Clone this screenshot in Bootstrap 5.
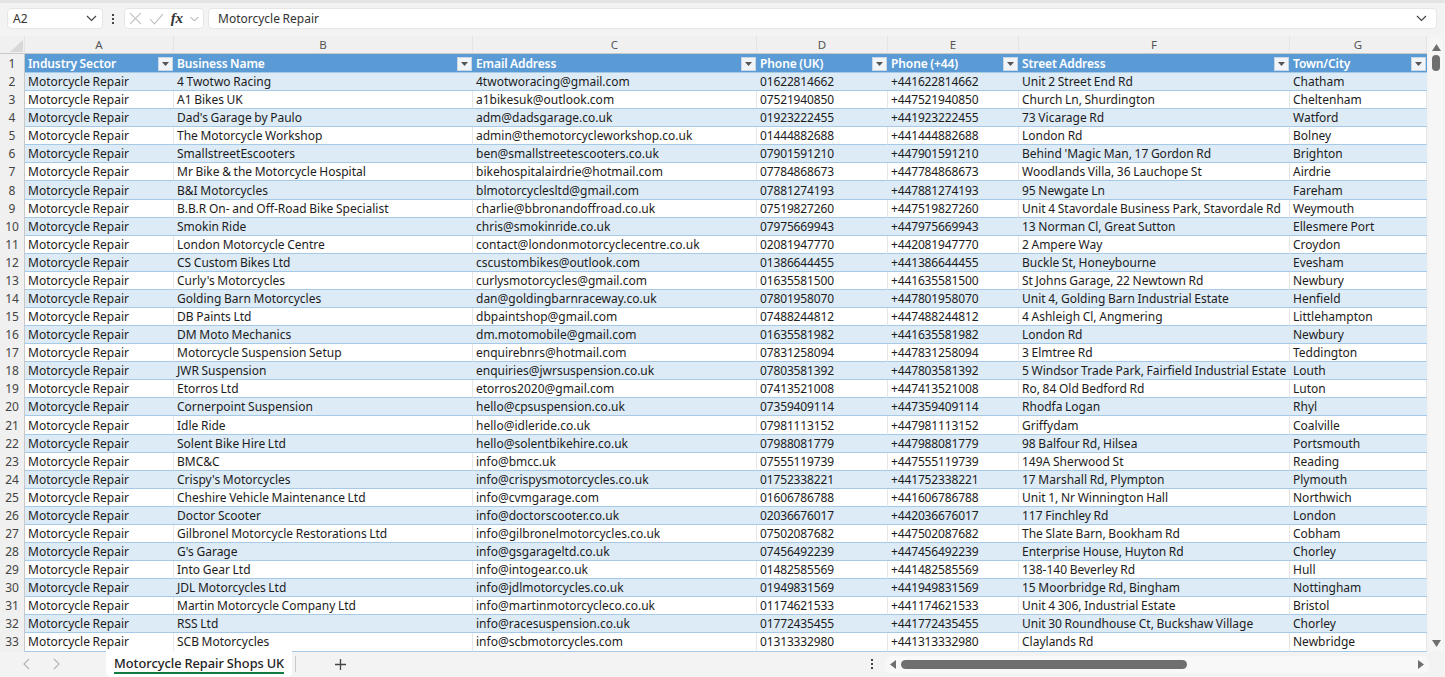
<!DOCTYPE html>
<html lang="en">
<head>
<meta charset="utf-8">
<title>Motorcycle Repair Shops UK</title>
<link href="https://cdn.jsdelivr.net/npm/bootstrap@5.3.0/dist/css/bootstrap.min.css" rel="stylesheet">
<style>
html,body{height:100%;overflow:hidden}
body{background:#f3f3f3;font-family:"Noto Sans","Open Sans",sans-serif;font-size:12px;word-spacing:-.5px;color:#1f1f1f}
.shell{height:677px}
.fbar{height:36px;padding:5px 8px 7px 7px;border-top:3px solid #e4e4e4;gap:4px}
.fbox{background:#fff;border:1px solid #e6e6e6;border-radius:4px;height:21px;color:#333}
.namebox{width:96px;padding:0 5px}
.fxbox{width:80px;padding:0 4px;gap:7px}
.formula{padding:0 9px}
.gridarea{height:615px}
.sheetwrap{width:1427px}
table.sheet{table-layout:fixed;width:1427px;border-collapse:separate;border-spacing:0;margin:0}
table.sheet td,table.sheet th{padding:1px 0 0 3px;height:18.08px;line-height:16px;white-space:nowrap;overflow:hidden;font-weight:400;border-bottom:1px solid #a6c9e8;color:#1c1c1c}
table.sheet thead .letters th{height:18px;background:#f0f0f0;border-bottom:1px solid #c8c8c8;border-right:1px solid #e4e4e4;text-align:center;padding:0;color:#555;font-size:11.5px}
table.sheet thead .letters th.corner{padding:2px 2px 0 10px}
table.sheet tbody th{background:#f0f0f0;color:#444;text-align:center;padding:0;border-bottom:0;border-right:1px solid #c8c8c8;font-size:12px}
table.sheet tr.heads td{background:#5b9bd5;color:#fff;font-weight:600;height:19px;letter-spacing:-.1px;border-bottom:1px solid #a6c9e8}
.headin{display:flex;justify-content:space-between;align-items:center;padding-right:1px}
.filt{width:15px;height:14px;background:#f1f4f8;border:1px solid #c9d6e4;display:flex;align-items:center;justify-content:center;flex:none}
table.sheet tbody tr.band td{background:#ddebf7}
table.sheet tbody tr.plain td{background:#fff;border-right:1px solid #e6e6e6}
table.sheet td.digits{letter-spacing:-.14px}
.vscroll{flex:1;position:relative;background:#f6f6f6;border-radius:6px 6px 0 0;margin:0 2px}
.vthumb{width:8px;height:16px;background:#6f6f6f;border-radius:4px;margin:0 auto}
.tabsbar{height:26px;position:relative}
.navarrows{width:106px;padding-left:23px;gap:23px}
.sheet-tab{width:186px;background:#fff;border-radius:0 0 5px 5px;padding:0 8px;height:26px;font-size:12.8px;line-height:24px;color:#222;font-weight:500;white-space:nowrap}
.sheet-tab span{display:block;border-bottom:2px solid #107c41;height:23px;text-align:center}
.tabsep{width:1px;height:16px;background:#c9c9c9;margin:0 38px 0 3px}
.hscroll{width:544px;height:17px;background:#f8f8f8;border-radius:6px;padding:0 5px;margin-right:16px}
.hthumb{width:286px;height:9px;background:#6f6f6f;border-radius:5px;margin-left:5px}
.dots{margin-right:11px}
</style>
</head>
<body>
<div class="shell d-flex flex-column">
  <div class="fbar d-flex align-items-center">
    <div class="fbox namebox d-flex align-items-center justify-content-between"><span>A2</span>
      <svg width="11" height="7" viewBox="0 0 11 7"><path d="M1 1l4.500 4.500L10 1" fill="none" stroke="#444" stroke-width="1.200"/></svg></div>
    <svg width="5" height="12" viewBox="0 0 5 12" class="mx-1"><g fill="#444"><rect x="1" y="1" width="2" height="2"/><rect x="1" y="5" width="2" height="2"/><rect x="1" y="9" width="2" height="2"/></g></svg>
    <div class="fbox fxbox d-flex align-items-center">
      <svg width="13" height="13" viewBox="0 0 13 13"><path d="M1 1l11 11M12 1L1 12" stroke="#bdbdbd" stroke-width="1.100" fill="none"/></svg>
      <svg width="15" height="12" viewBox="0 0 15 12"><path d="M1 6l4.500 5L14 1" stroke="#bdbdbd" stroke-width="1.100" fill="none"/></svg>
      <span style="font-family:'Liberation Serif',serif;font-style:italic;font-weight:700;font-size:15px;color:#333">fx</span>
      <svg width="9" height="6" viewBox="0 0 9 6"><path d="M.5 1l4 4 4-4" stroke="#999" fill="none"/></svg>
    </div>
    <div class="fbox formula flex-grow-1 d-flex align-items-center justify-content-between"><span>Motorcycle Repair</span>
      <svg width="11" height="7" viewBox="0 0 11 7" class="me-0"><path d="M1 1l4.500 4.500L10 1" fill="none" stroke="#444" stroke-width="1.200"/></svg></div>
  </div>
  <div class="gridarea d-flex">
    <div class="sheetwrap">
    <table class="sheet">
      <colgroup><col style="width:25px"><col style="width:149px"><col style="width:299px"><col style="width:284px"><col style="width:131px"><col style="width:131px"><col style="width:271px"><col style="width:137px"></colgroup>
      <thead><tr class="letters"><th class="corner"><svg width="13" height="12" viewBox="0 0 13 12" class="d-block"><path d="M13 0v12H0z" fill="#d8d8d8"/></svg></th><th>A</th><th>B</th><th>C</th><th>D</th><th>E</th><th>F</th><th>G</th></tr></thead>
      <tbody id="rows"></tbody>
    </table>
    </div>
    <div class="vscroll d-flex flex-column">
      <svg width="9" height="7" viewBox="0 0 9 7" class="mx-auto mt-2 mb-1 d-block"><path d="M4.500 0L9 7H0z" fill="#6f6f6f"/></svg>
      <div class="vthumb"></div>
      <svg width="9" height="7" viewBox="0 0 9 7" class="mx-auto mt-auto mb-1 d-block"><path d="M0 0h9L4.500 7z" fill="#6f6f6f"/></svg>
    </div>
  </div>
  <div class="tabsbar d-flex align-items-center">
    <div class="navarrows d-flex align-items-center">
      <svg width="7" height="12" viewBox="0 0 7 12"><path d="M6 1L1 6l5 5" stroke="#b5b5b5" stroke-width="1.200" fill="none"/></svg>
      <svg width="7" height="12" viewBox="0 0 7 12"><path d="M1 1l5 5-5 5" stroke="#b5b5b5" stroke-width="1.200" fill="none"/></svg>
    </div>
    <div class="sheet-tab"><span>Motorcycle Repair Shops UK</span></div>
    <div class="tabsep"></div>
    <svg width="13" height="13" viewBox="0 0 13 13"><path d="M6.500 1v11M1 6.500h11" stroke="#444" stroke-width="1.300"/></svg>
    <div class="ms-auto d-flex align-items-center">
      <svg width="4" height="12" viewBox="0 0 4 12" class="dots"><g fill="#444"><rect x="1" y="1" width="2" height="2"/><rect x="1" y="5" width="2" height="2"/><rect x="1" y="9" width="2" height="2"/></g></svg>
      <div class="hscroll d-flex align-items-center">
        <svg width="6" height="9" viewBox="0 0 6 9"><path d="M6 0v9L0 4.500z" fill="#6f6f6f"/></svg>
        <div class="hthumb"></div>
        <svg width="6" height="9" viewBox="0 0 6 9" class="ms-auto"><path d="M0 0v9l6-4.500z" fill="#6f6f6f"/></svg>
      </div>
    </div>
  </div>
</div>
<script>
const data=`4 Twotwo Racing|4twotworacing@gmail.com|01622814662|+441622814662|Unit 2 Street End Rd|Chatham
A1 Bikes UK|a1bikesuk@outlook.com|07521940850|+447521940850|Church Ln, Shurdington|Cheltenham
Dad's Garage by Paulo|adm@dadsgarage.co.uk|01923222455|+441923222455|73 Vicarage Rd|Watford
The Motorcycle Workshop|admin@themotorcycleworkshop.co.uk|01444882688|+441444882688|London Rd|Bolney
SmallstreetEscooters|ben@smallstreetescooters.co.uk|07901591210|+447901591210|Behind 'Magic Man, 17 Gordon Rd|Brighton
Mr Bike &amp; the Motorcycle Hospital|bikehospitalairdrie@hotmail.com|07784868673|+447784868673|Woodlands Villa, 36 Lauchope St|Airdrie
B&amp;I Motorcycles|blmotorcyclesltd@gmail.com|07881274193|+447881274193|95 Newgate Ln|Fareham
B.B.R On- and Off-Road Bike Specialist|charlie@bbronandoffroad.co.uk|07519827260|+447519827260|Unit 4 Stavordale Business Park, Stavordale Rd|Weymouth
Smokin Ride|chris@smokinride.co.uk|07975669943|+447975669943|13 Norman Cl, Great Sutton|Ellesmere Port
London Motorcycle Centre|contact@londonmotorcyclecentre.co.uk|02081947770|+442081947770|2 Ampere Way|Croydon
CS Custom Bikes Ltd|cscustombikes@outlook.com|01386644455|+441386644455|Buckle St, Honeybourne|Evesham
Curly's Motorcycles|curlysmotorcycles@gmail.com|01635581500|+441635581500|St Johns Garage, 22 Newtown Rd|Newbury
Golding Barn Motorcycles|dan@goldingbarnraceway.co.uk|07801958070|+447801958070|Unit 4, Golding Barn Industrial Estate|Henfield
DB Paints Ltd|dbpaintshop@gmail.com|07488244812|+447488244812|4 Ashleigh Cl, Angmering|Littlehampton
DM Moto Mechanics|dm.motomobile@gmail.com|01635581982|+441635581982|London Rd|Newbury
Motorcycle Suspension Setup|enquirebnrs@hotmail.com|07831258094|+447831258094|3 Elmtree Rd|Teddington
JWR Suspension|enquiries@jwrsuspension.co.uk|07803581392|+447803581392|5 Windsor Trade Park, Fairfield Industrial Estate|Louth
Etorros Ltd|etorros2020@gmail.com|07413521008|+447413521008|Ro, 84 Old Bedford Rd|Luton
Cornerpoint Suspension|hello@cpsuspension.co.uk|07359409114|+447359409114|Rhodfa Logan|Rhyl
Idle Ride|hello@idleride.co.uk|07981113152|+447981113152|Griffydam|Coalville
Solent Bike Hire Ltd|hello@solentbikehire.co.uk|07988081779|+447988081779|98 Balfour Rd, Hilsea|Portsmouth
BMC&amp;C|info@bmcc.uk|07555119739|+447555119739|149A Sherwood St|Reading
Crispy's Motorcycles|info@crispysmotorcycles.co.uk|01752338221|+441752338221|17 Marshall Rd, Plympton|Plymouth
Cheshire Vehicle Maintenance Ltd|info@cvmgarage.com|01606786788|+441606786788|Unit 1, Nr Winnington Hall|Northwich
Doctor Scooter|info@doctorscooter.co.uk|02036676017|+442036676017|117 Finchley Rd|London
Gilbronel Motorcycle Restorations Ltd|info@gilbronelmotorcycles.co.uk|07502087682|+447502087682|The Slate Barn, Bookham Rd|Cobham
G's Garage|info@gsgarageltd.co.uk|07456492239|+447456492239|Enterprise House, Huyton Rd|Chorley
Into Gear Ltd|info@intogear.co.uk|01482585569|+441482585569|138-140 Beverley Rd|Hull
JDL Motorcycles Ltd|info@jdlmotorcycles.co.uk|01949831569|+441949831569|15 Moorbridge Rd, Bingham|Nottingham
Martin Motorcycle Company Ltd|info@martinmotorcycleco.co.uk|01174621533|+441174621533|Unit 4 306, Industrial Estate|Bristol
RSS Ltd|info@racesuspension.co.uk|01772435455|+441772435455|Unit 30 Roundhouse Ct, Buckshaw Village|Chorley
SCB Motorcycles|info@scbmotorcycles.com|01313332980|+441313332980|Claylands Rd|Newbridge`.split("\n");
const arrow='<span class="filt"><svg width="7" height="4" viewBox="0 0 7 4"><path d="M0 0h7L3.500 4z" fill="#555"/></svg></span>';
const heads=["Industry Sector","Business Name","Email Address","Phone (UK)","Phone (+44)","Street Address","Town/City"];
let h='<tr class="heads"><th>1</th>'+heads.map(t=>`<td><div class="headin"><span>${t}</span>${arrow}</div></td>`).join("")+'</tr>';
data.forEach((r,i)=>{h+=`<tr class="${i%2?'plain':'band'}"><th>${i+2}</th><td>Motorcycle Repair</td>`+r.split("|").map((c,j)=>`<td${j==2||j==3?' class="digits"':''}>${c}</td>`).join("")+'</tr>';});
document.getElementById("rows").innerHTML=h;
</script>
<script src="https://cdn.jsdelivr.net/npm/bootstrap@5.3.0/dist/js/bootstrap.bundle.min.js"></script>
</body>
</html>
